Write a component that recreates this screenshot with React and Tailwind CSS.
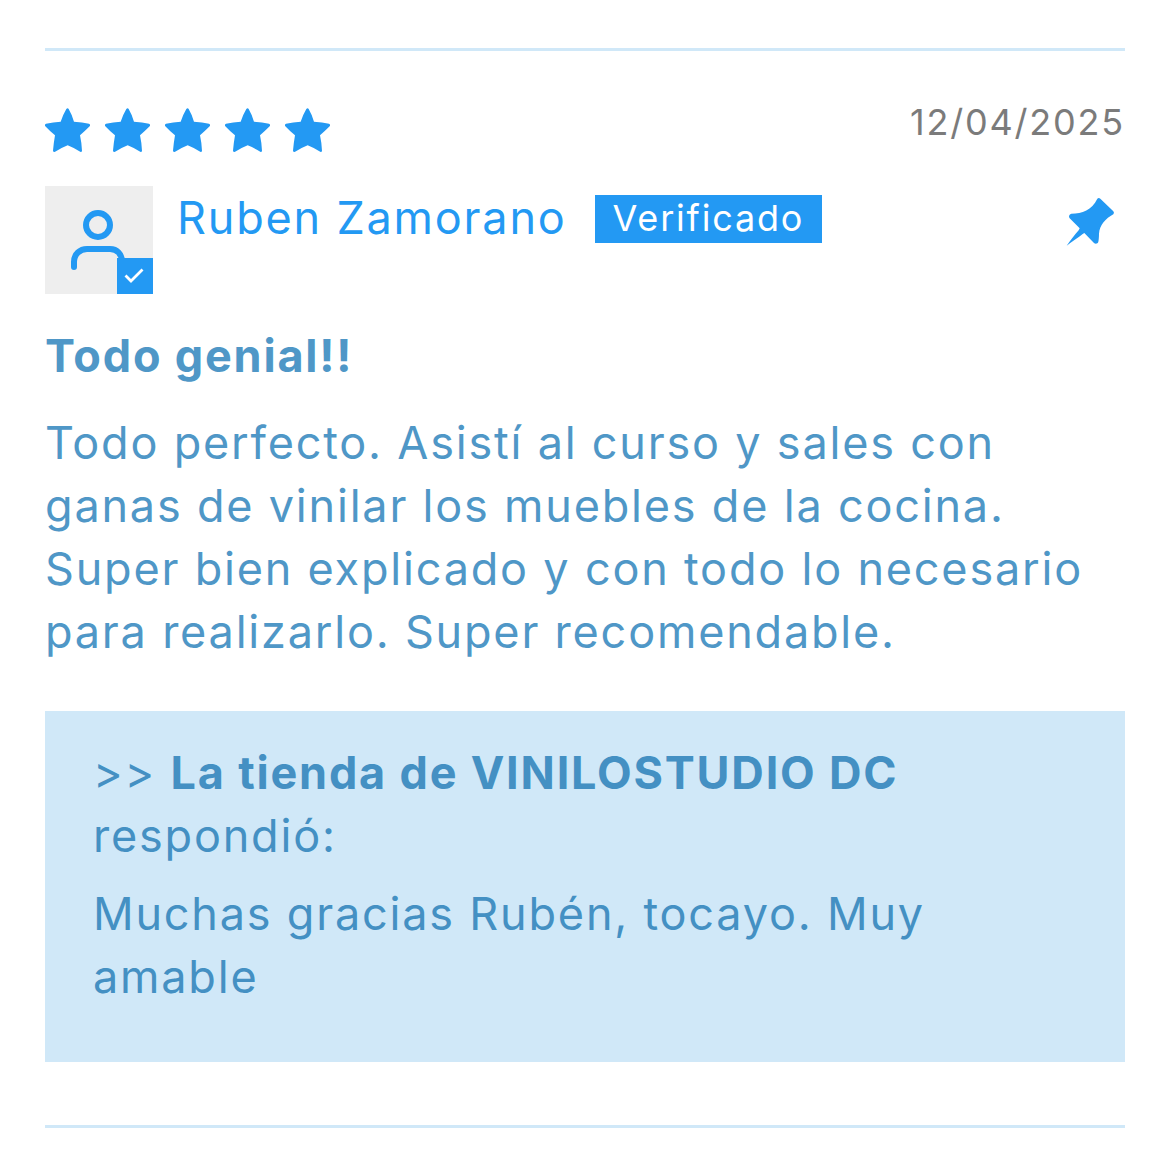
import React from "react";

const review = {
  author: "Ruben Zamorano",
  date: "12/04/2025",
  rating: 5,
  title: "Todo genial!!",
  body: "Todo perfecto. Asistí al curso y sales con ganas de vinilar los muebles de la cocina. Super bien explicado y con todo lo necesario para realizarlo. Super recomendable.",
  shop: "La tienda de VINILOSTUDIO DC",
  reply: "Muchas gracias Rubén, tocayo. Muy amable",
};

function Star() {
  return (
    <svg viewBox="0 0 135 132" className="h-11 w-[45px]" fill="currentColor" aria-hidden="true">
      <path d="M64 3Q68 -1 71 3Q82 22 87 41Q112 43 132 47Q138 50 134 55Q119 70 105 82Q110 105 111 128Q111 132 107 132Q88 120 68 112Q48 120 29 132Q24 132 24 128Q26 105 30 82Q15 70 1 55Q-3 50 3 47Q25 43 47 41Q53 22 64 3Z" />
    </svg>
  );
}

function UserIcon() {
  return (
    <svg viewBox="0 0 108 108" className="size-full" fill="none" stroke="currentColor" strokeWidth="6" strokeLinecap="round" aria-hidden="true">
      <circle cx="53" cy="39" r="12" />
      <path d="M29 81V76C29 68 35 63 42 63H65C72 63 77 68 77 76V81" />
    </svg>
  );
}

function PinIcon() {
  return (
    <svg viewBox="0 0 150 150" className="size-[50px]" fill="currentColor" aria-hidden="true">
      <path d="M97 5Q101 1 106 5L145 43Q149 48 145 52C122 64 104 85 102 110C102 120 101 130 100 134C98 141 91 141 87 138L58 108L53 111C40 123 22 132 5 146C18 129 30 112 41 100L44 94L14 64C10 59 12 52 19 50C52 49 80 40 97 5Z" />
    </svg>
  );
}

function App() {
  return (
    <div className="bg-white px-[45px] pt-12 pb-10 font-['Inter','Liberation_Sans',sans-serif] text-[45px] leading-[63px] tracking-[0.04em] text-[#4f97c7]">
      <article className="border-y-3 border-[#d0e8f8] pb-[63px]">
        <div className="flex items-start justify-between pt-[47px]">
          <div className="flex gap-[15px] pt-[10px] text-[#2399f3]" role="img" aria-label="5 de 5 estrellas">
            {Array.from({ length: review.rating }).map((_, i) => (
              <Star key={i} />
            ))}
          </div>
          <time className="text-4xl leading-[48px] text-[#7b7b7b]">{review.date}</time>
        </div>

        <div className="mt-[34px] flex items-start text-[#2399f3]">
          <div className="relative size-[108px] shrink-0 bg-[#eeeeee]">
            <UserIcon />
            <div className="absolute right-0 bottom-0 size-9 bg-[#2399f3] text-white">
              <svg viewBox="0 0 36 36" className="size-full" fill="none" stroke="currentColor" strokeWidth="2.8" aria-hidden="true">
                <path d="M8.5 17.5L14 23L25.5 11.5" />
              </svg>
            </div>
          </div>
          <div className="ml-6 flex grow items-start gap-7">
            <span>{review.author}</span>
            <span className="mt-[9px] bg-[#2399f3] px-[18px] pb-0.5 text-4xl leading-[46px] text-white">Verificado</span>
          </div>
          <div className="mt-[11px] mr-[10px]">
            <PinIcon />
          </div>
        </div>

        <h3 className="mt-[30px] font-bold">{review.title}</h3>
        <p className="mt-6">{review.body}</p>

        <div className="mt-12 bg-[#d0e8f8] px-12 pt-[30px] pb-[54px] text-[#4490c3]">
          <div>
            &gt;&gt; <b className="font-bold">{review.shop}</b> respondió:
          </div>
          <p className="mt-[15px]">{review.reply}</p>
        </div>
      </article>
    </div>
  );
}

export default App;
